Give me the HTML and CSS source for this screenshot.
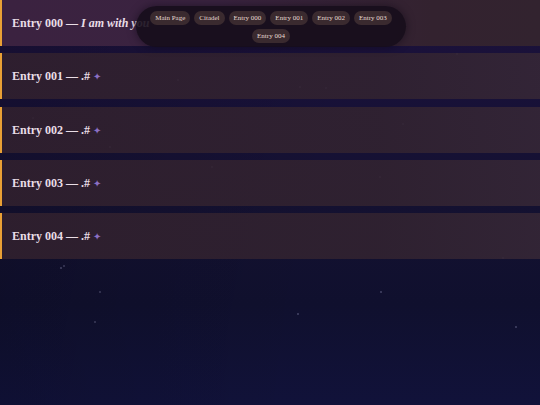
FILE: index.html
```html
<!DOCTYPE html>
<html lang="en">
<head>
<meta charset="utf-8">
<title>Entries</title>
<link rel="stylesheet" href="styles.css">
</head>
<body>
<div class="stars"></div>
<main class="entries">
  <section class="entry entry-first"><h2 class="entry-title">Entry 000 — <em>I am with you</em></h2></section>
  <section class="entry"><h2 class="entry-title">Entry 001 — .# <span class="spark">✦</span></h2></section>
  <section class="entry"><h2 class="entry-title">Entry 002 — .# <span class="spark">✦</span></h2></section>
  <section class="entry"><h2 class="entry-title">Entry 003 — .# <span class="spark">✦</span></h2></section>
  <section class="entry"><h2 class="entry-title">Entry 004 — .# <span class="spark">✦</span></h2></section>
</main>
<nav class="nav-pill">
  <a class="chip">Main Page</a>
  <a class="chip">Citadel</a>
  <a class="chip">Entry 000</a>
  <a class="chip">Entry 001</a>
  <a class="chip">Entry 002</a>
  <a class="chip">Entry 003</a>
  <a class="chip">Entry 004</a>
</nav>
</body>
</html>
```
FILE: styles.css
```css
html, body {
  margin: 0;
  padding: 0;
}
body {
  width: 540px;
  height: 405px;
  overflow: hidden;
  position: relative;
  font-family: "Liberation Serif", "Times New Roman", serif;
  background:
    linear-gradient(100deg, rgba(0,0,0,0.14) 0%, rgba(0,0,0,0) 60%),
    linear-gradient(180deg, #1f1238 0%, #19113a 15%, #141131 50%, #10102e 75%, #11123a 100%);
}
.stars {
  position: absolute;
  inset: 0;
  pointer-events: none;
  opacity: 0.45;
  background:
    radial-gradient(circle at 61px 268px, rgba(200,200,240,0.6) 0.6px, transparent 1.1px),
    radial-gradient(circle at 100px 292px, rgba(200,200,240,0.5) 0.6px, transparent 1.1px),
    radial-gradient(circle at 95px 322px, rgba(200,200,240,0.5) 0.6px, transparent 1.1px),
    radial-gradient(circle at 298px 314px, rgba(200,200,240,0.6) 0.6px, transparent 1.1px),
    radial-gradient(circle at 381px 292px, rgba(200,200,240,0.6) 0.6px, transparent 1.1px),
    radial-gradient(circle at 516px 327px, rgba(200,200,240,0.6) 0.6px, transparent 1.1px),
    radial-gradient(circle at 503px 258px, rgba(200,200,240,0.5) 0.6px, transparent 1.1px),
    radial-gradient(circle at 457px 54px, rgba(200,200,240,0.5) 0.6px, transparent 1.1px),
    radial-gradient(circle at 300px 87px, rgba(200,200,240,0.5) 0.6px, transparent 1.1px),
    radial-gradient(circle at 326px 88px, rgba(200,200,240,0.5) 0.6px, transparent 1.1px),
    radial-gradient(circle at 403px 124px, rgba(200,200,240,0.5) 0.6px, transparent 1.1px),
    radial-gradient(circle at 178px 80px, rgba(200,200,240,0.5) 0.6px, transparent 1.1px),
    radial-gradient(circle at 110px 147px, rgba(200,200,240,0.5) 0.6px, transparent 1.1px),
    radial-gradient(circle at 212px 167px, rgba(200,200,240,0.5) 0.6px, transparent 1.1px),
    radial-gradient(circle at 380px 177px, rgba(200,200,240,0.5) 0.6px, transparent 1.1px),
    radial-gradient(circle at 64px 266px, rgba(200,200,240,0.5) 0.6px, transparent 1.1px),
    radial-gradient(circle at 265px 17px, rgba(200,200,240,0.5) 0.6px, transparent 1.1px),
    radial-gradient(circle at 33px 118px, rgba(200,200,240,0.4) 0.6px, transparent 1.1px);
}
.entries {
  display: flex;
  flex-direction: column;
  gap: 7.25px;
  position: relative;
}
.entry {
  height: 46px;
  box-sizing: border-box;
  padding: 15px 10px;
  border-left: 2px solid #e9a035;
  background: linear-gradient(90deg, rgba(50, 33, 46, 0.85) 0%, rgba(50, 35, 48, 0.88) 70%, rgba(54, 39, 54, 0.88) 100%);
}
.entry-first {
  background: linear-gradient(90deg, #3b2240 0%, #3a2340 40%, #33222f 80%, #32232f 100%);
}
.entry-title {
  margin: 0;
  font-size: 12px;
  line-height: 16px;
  font-weight: bold;
  color: #e9dde6;
  white-space: nowrap;
}
.entry-title em {
  font-style: italic;
}
.spark {
  font-family: "DejaVu Sans", sans-serif;
  font-size: 10px;
  font-weight: normal;
  color: #8b6fc4;
}
.nav-pill {
  position: absolute;
  top: 6px;
  left: 136px;
  width: 270px;
  box-sizing: border-box;
  padding: 5px 12px 4px;
  display: flex;
  flex-wrap: wrap;
  justify-content: center;
  gap: 4px 4px;
  background: rgba(22, 13, 27, 0.9);
  border-radius: 21px;
  box-shadow: 0 0 8px rgba(10, 5, 15, 0.5);
}
.chip {
  display: block;
  height: 14px;
  line-height: 14px;
  padding: 0 5px;
  border-radius: 7px;
  background: #3a2a2f;
  color: #e6d9d2;
  font-size: 7px;
  white-space: nowrap;
}
```
